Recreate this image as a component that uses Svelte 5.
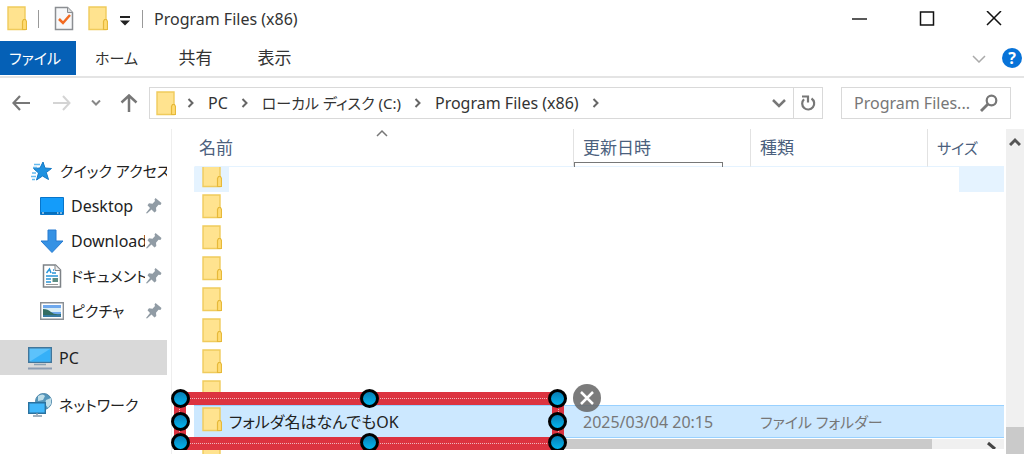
<script lang="ts">
	const tabs = ['ホーム', '共有', '表示'];
	const crumbs = [
		{ name: 'PC' },
		{ name: 'ローカル ディスク (C:)', kana: true },
		{ name: 'Program Files (x86)' }
	];

	const quickLinks = [
		{ name: 'Desktop', icon: 'desktop' },
		{ name: 'Downloads', icon: 'download' },
		{ name: 'ドキュメント', icon: 'document', kana: true },
		{ name: 'ピクチャ', icon: 'picture', kana: true }
	];

	const rows = ['hover', '', '', '', '', '', '', 'partial'];

	const handles = ['top start', 'top middle', 'top end', 'center start', 'center end', 'bottom start', 'bottom middle', 'bottom end'];

	let query = $state('');
</script>

{#snippet folder()}
	<svg class="folder" width="20" height="25" viewBox="0 0 20 25">
		<path d="M1 1h17v22.500H1z" fill="#ffe38f" stroke="#f0cb5c" stroke-width="1.400" />
		<path d="M15.500 23.500v-8l1-2h2l1 2v8z" fill="#ffdc74" stroke="#e6b93a" stroke-width="1.200" />
	</svg>
{/snippet}

{#snippet chevron()}
	<svg class="chevron" width="8" height="10" viewBox="0 0 8 10">
		<path d="M1.500 1l4 4-4 4" fill="none" stroke="#666" stroke-width="2" />
	</svg>
{/snippet}

{#snippet pin()}
	<svg class="pin" width="16" height="16" viewBox="0 0 16 16">
		<path d="M9.500 0l6 5-1 2-2-.3-2.500 3 .3 3.300-1.800 1.500-3-3L1 15.500l-1-.5 4-5L1.500 7.200 3 5.300l3.500.4L9 3 8.500 1.500z" fill="#919ca5" />
	</svg>
{/snippet}

<div class="window">
	<header class="titlebar">
		{@render folder()}
		<span class="divider"></span>
		<button class="tool doc" aria-label="プロパティ">
			<svg width="20" height="25" viewBox="0 0 20 25">
				<path d="M1.500 1.500h12l5 5v17h-17z" fill="#f7f8fa" stroke="#8b8e92" stroke-width="1.500" />
				<path d="M13.500 1.500v5h5" fill="#ddd" stroke="#8b8e92" />
				<path d="M5 13l4 4 7-8" fill="none" stroke="#f26a21" stroke-width="2.500" />
			</svg>
		</button>
		<button class="tool" aria-label="新しいフォルダー">{@render folder()}</button>
		<button class="tool more" aria-label="カスタマイズ">
			<svg width="12" height="10" viewBox="0 0 12 10">
				<path d="M1 0h10v2H1zM1 4.500h10L6 9.500z" fill="#222" />
			</svg>
		</button>
		<span class="divider"></span>
		<h1 class="title">Program Files (x86)</h1>
		<div class="controls">
			<button aria-label="最小化">
				<svg width="16" height="16" viewBox="0 0 16 16"><path d="M0 8h15" stroke="#222" stroke-width="1.500" /></svg>
			</button>
			<button aria-label="最大化">
				<svg width="16" height="16" viewBox="0 0 16 16"><path d="M1.500 1h13v13h-13z" fill="none" stroke="#111" stroke-width="1.500" /></svg>
			</button>
			<button aria-label="閉じる">
				<svg width="16" height="16" viewBox="0 0 16 16"><path d="M1 0l14 14M15 0L1 14" stroke="#111" stroke-width="1.500" /></svg>
			</button>
		</div>
	</header>

	<nav class="ribbon">
		<button class="tab file">ファイル</button>
		{#each tabs as tab}
			<button class="tab">{tab}</button>
		{/each}
		<button class="expand" aria-label="リボンの展開">
			<svg width="14" height="8" viewBox="0 0 14 8"><path d="M1 1l6 6 6-6" fill="none" stroke="#aaa" stroke-width="1.500" /></svg>
		</button>
		<button class="help" aria-label="ヘルプ">?</button>
	</nav>

	<div class="address-row">
		<div class="history">
			<button aria-label="戻る">
				<svg width="18" height="16" viewBox="0 0 18 16"><path d="M8 1L1.500 8 8 15M1.500 8H18" fill="none" stroke="#777" stroke-width="2.200" /></svg>
			</button>
			<button aria-label="進む">
				<svg width="18" height="16" viewBox="0 0 18 16"><path d="M10 1l6.500 7L10 15M16.500 8H0" fill="none" stroke="#d4d4d4" stroke-width="2" /></svg>
			</button>
			<button class="recent" aria-label="最近表示した場所">
				<svg width="10" height="6" viewBox="0 0 10 6"><path d="M1 0.500l4 4 4-4" fill="none" stroke="#888" stroke-width="2" /></svg>
			</button>
			<button aria-label="上へ">
				<svg width="18" height="18" viewBox="0 0 18 18"><path d="M1.500 8.500L9 1.500l7.500 7M9 2v16" fill="none" stroke="#777" stroke-width="2.500" /></svg>
			</button>
		</div>
		<div class="address">
			{@render folder()}
			{@render chevron()}
			{#each crumbs as crumb}
				<a href="#top" class:kana={crumb.kana}>{crumb.name}</a>
				{@render chevron()}
			{/each}
			<button class="drop" aria-label="以前の場所">
				<svg width="14" height="9" viewBox="0 0 14 9"><path d="M1 1l6 6 6-6" fill="none" stroke="#777" stroke-width="2.500" /></svg>
			</button>
			<button class="reload" aria-label="更新">
				<svg width="16" height="16" viewBox="0 0 16 16">
					<path d="M11.500 3.500A6 6 0 1 1 4 4.200" fill="none" stroke="#777" stroke-width="2.200" />
					<path d="M2 1.500h6v6" fill="none" stroke="#777" stroke-width="2.200" />
				</svg>
			</button>
		</div>
		<label class="search">
			<input type="text" aria-label="検索" placeholder="Program Files..." bind:value={query} />
			<svg width="18" height="18" viewBox="0 0 18 18">
				<circle cx="11.500" cy="6.500" r="4.800" fill="none" stroke="#777" stroke-width="2.200" />
				<path d="M8 10l-7 7" stroke="#777" stroke-width="2.800" />
			</svg>
		</label>
	</div>

	<div class="content">
		<aside class="sidebar">
			<a class="place" href="#quick">
				<svg width="24" height="20" viewBox="0 0 24 20">
					<path d="M14 1l2 6 6.500.5-5.200 4 2.200 7L13.500 15 7.500 19l2-7-5-4.500 6.500-.5z" fill="#1e91e0" stroke="#1478c4" />
					<path d="M5 3.500h6M4 6.500h4M3 12h4M2 15.500h5M3 18.500h3" stroke="#64baf0" stroke-width="1.500" />
				</svg>
				<span class="name kana">クイック アクセス</span>
			</a>
			{#each quickLinks as link}
				<a class="place sub" href="#{link.icon}">
					<svg width="24" height="24" viewBox="0 0 24 24">
						{#if link.icon === 'desktop'}
							<path d="M.5 3.500h23v17H.5z" fill="#149cfa" stroke="#0875ca" />
							<path d="M1 18h22v2H1z" fill="#0670bd" />
							<path d="M2 19h2M17 19h1.500M20 19h2" stroke="#fff" />
						{:else if link.icon === 'download'}
							<path d="M8 1h8v11h7L12 23.500 1 12h7z" fill="#3692e4" stroke="#277bd0" />
						{:else if link.icon === 'document'}
							<path d="M3.500 1h12l5 5v17h-17z" fill="#fff" stroke="#7d8287" stroke-width="1.500" />
							<path d="M15 1v5.500h5.500" fill="#eee" stroke="#7d8287" />
							<path d="M6.500 9l3-4 1.500 4M13 6h1M12 9h4M6 12h12M6 15h5M6 18h5" fill="none" stroke="#2995d8" stroke-width="1.500" />
							<path d="M6 20.500h12" stroke="#999" />
							<path d="M12.500 14h5.500v4h-5.500z" fill="#5d8e84" />
						{:else}
							<path d="M.7 3.700h22.600v16.600H.7z" fill="#fff" stroke="#8b9095" stroke-width="1.400" />
							<path d="M3 6h18v12H3z" fill="#6fa9ee" />
							<path d="M3 9h18v4H3z" fill="#d9edf5" />
							<path d="M3 10q5 0 8 3t10 2v3H3z" fill="#356d62" />
							<path d="M3 16h18v2H3z" fill="#387aa2" />
						{/if}
					</svg>
					<span class="name" class:kana={link.kana}>{link.name}</span>
					{@render pin()}
				</a>
			{/each}
			<a class="place root current" href="#pc">
				<svg width="24" height="24" viewBox="0 0 24 24">
					<path d="M.7 1.700h22.600v14.600H.7z" fill="#5cc2fb" stroke="#41769b" stroke-width="1.400" />
					<path d="M2 15.500L22 3v12.500z" fill="#35b0f8" />
					<path d="M6 18.500h12" stroke="#8ba0b2" stroke-width="1.500" />
					<path d="M0 22.500h24" stroke="#8c9db2" stroke-width="2" />
				</svg>
				<span class="name">PC</span>
			</a>
			<a class="place root" href="#network">
				<svg width="24" height="24" viewBox="0 0 24 24">
					<circle cx="15.500" cy="8.500" r="8" fill="#5496bb" stroke="#4c86a9" />
					<path d="M10 3q5-3 7 0l-2 4-5 1zM18 7l5-2v6l-3 4-3-4z" fill="#bfdee9" />
					<path d="M.7 9.700h16.600v10.600H.7z" fill="#41b7fa" stroke="#2b729f" stroke-width="1.400" />
					<path d="M9 20v2M5 23h9" stroke="#8297a8" stroke-width="1.500" />
				</svg>
				<span class="name kana">ネットワーク</span>
			</a>
		</aside>

		<main class="files">
			<div class="list">
				<table>
					<colgroup>
						<col />
						<col class="col-wide" />
						<col class="col-wide" />
						<col class="col-size" />
					</colgroup>
					<thead>
						<tr>
							<th>
								名前
								<svg class="sort" width="12" height="8" viewBox="0 0 12 8"><path d="M1 7l5-5 5 5" fill="none" stroke="#777" stroke-width="1.500" /></svg>
							</th>
							<th class="date">更新日時</th>
							<th>種類</th>
							<th>サイズ</th>
						</tr>
					</thead>
					<tbody>
						{#each rows as row}
							<tr class={row}>
								<td><div class="cell"><span class="mark">{@render folder()}</span></div></td>
								<td></td>
								<td></td>
								<td><div class="cell tail"></div></td>
							</tr>
						{/each}
						<tr class="selected">
							<td>
								<div class="cell"><span class="mark">{@render folder()}</span>フォルダ名はなんでもOK</div>
								<div class="annotation">
									<div class="frame"></div>
									{#each handles as handle}
										<span class="handle {handle}"></span>
									{/each}
								</div>
								<button class="remove" aria-label="削除">
									<svg width="28" height="28" viewBox="0 0 28 28"><path d="M8 8l12 12M20 8L8 20" stroke="#fff" stroke-width="2.500" /></svg>
								</button>
							</td>
							<td>2025/03/04 20:15</td>
							<td class="kana">ファイル フォルダー</td>
							<td></td>
						</tr>
					</tbody>
				</table>
			</div>
			<div class="hscroll">
				<div class="thumb"></div>
				<svg width="12" height="10" viewBox="0 0 12 10"><path d="M2 4l7 6" stroke="#444" stroke-width="3" /></svg>
			</div>
			<div class="next">{@render folder()}</div>
		</main>

		<div class="vscroll">
			<svg width="12" height="9" viewBox="0 0 12 9"><path d="M1 8l5-5 5 5" fill="none" stroke="#555" stroke-width="3" /></svg>
			<div class="thumb"></div>
		</div>
	</div>
</div>

<style>
	:global(body) {
		overflow: hidden;
		background: #fff;
	}

	.window {
		display: flex;
		flex-direction: column;
		min-height: 100vh;
		font-family: 'Noto Sans', 'Noto Sans CJK JP', sans-serif;
		font-size: 16px;
		font-feature-settings: 'palt';
		line-height: 24px;
		color: #333;
	}

	svg {
		display: block;
		flex: none;
	}

	button {
		display: flex;
		align-items: center;
		justify-content: center;
		padding: 0;
		border: none;
		background: none;
		font: inherit;
		font-feature-settings: inherit;
		color: inherit;
		cursor: pointer;
	}

	a {
		color: inherit;
		text-decoration: none;
		white-space: nowrap;
	}

	.kana {
		font-size: 15px;
	}

	.titlebar {
		display: flex;
		align-items: center;
		height: 37px;
		padding: 0 22px 4px 7px;
	}

	.divider {
		width: 1px;
		height: 18px;
		margin: 0 11px;
		background: #999;
	}

	.tool {
		margin-right: 14px;
	}

	.doc {
		margin-left: 4px;
	}

	.more {
		margin: 4px 0 0 -3px;
	}

	.title {
		margin: 0;
		font-size: 16px;
		font-weight: 400;
	}

	.controls {
		display: flex;
		gap: 51px;
		margin-left: auto;
	}

	.ribbon {
		display: flex;
		height: 35px;
		border-bottom: 2px solid #e4e4e4;
	}

	.tab {
		width: 79px;
		height: 34px;
		font-size: 17px;
	}

	.tab:nth-child(2) {
		font-size: 15px;
	}

	.tab.file {
		width: 76px;
		margin-right: 1px;
		padding-right: 6px;
		background: #0560b6;
		color: #fff;
		font-size: 15px;
	}

	.expand {
		margin-left: auto;
	}

	.help {
		width: 20px;
		height: 20px;
		margin: 7px 2px 0 16px;
		border-radius: 50%;
		background: #0873d8;
		color: #fff;
		font-weight: 700;
		line-height: 20px;
	}

	.address-row {
		display: flex;
		padding: 9px 13px 10px 0;
	}

	.history {
		display: flex;
		align-items: center;
		justify-content: space-between;
		width: 126px;
		margin: 0 11px 0 12px;
	}

	.recent {
		margin: 0 -4px;
	}

	.address {
		display: flex;
		flex: 1;
		align-items: center;
		gap: 13px;
		height: 30px;
		padding-left: 6px;
		border: 1px solid #d9d9d9;
	}

	.address .folder {
		margin-right: -2px;
	}

	.drop {
		margin-left: auto;
	}

	.reload {
		width: 29px;
		height: 30px;
		margin-left: -6px;
		border-left: 1px solid #d9d9d9;
	}

	.search {
		display: flex;
		align-items: center;
		width: 144px;
		margin-left: 18px;
		padding: 0 12px;
		border: 1px solid #d9d9d9;
	}

	.search input {
		flex: 1;
		min-width: 0;
		padding: 0;
		border: none;
		outline: none;
		font: inherit;
	}

	.search input::placeholder {
		color: #777;
		opacity: 1;
	}

	.content {
		display: flex;
		flex: 1;
	}

	.sidebar {
		width: 167px;
		padding-top: 24px;
	}

	.place {
		display: flex;
		align-items: center;
		gap: 7px;
		height: 35px;
		padding-left: 29px;
		color: #222;
	}

	.place .name {
		flex: 1;
		overflow: hidden;
	}

	.place.sub {
		padding-left: 40px;
	}

	.sub .name {
		margin-right: -6px;
	}

	.pin {
		margin-right: 5px;
	}

	.place.root {
		margin-top: 12px;
		padding-left: 28px;
	}

	.place.current {
		background: #d9d9d9;
	}

	.files {
		flex: 1;
		min-width: 0;
		margin-left: 4px;
		border-left: 1px solid #eee;
	}

	.list {
		padding-left: 22px;
	}

	table {
		width: 100%;
		table-layout: fixed;
		border-collapse: separate;
		border-spacing: 0;
	}

	.col-wide {
		width: 177px;
	}

	.col-size {
		width: 77px;
	}

	th {
		position: relative;
		box-sizing: border-box;
		height: 38px;
		padding: 0 0 0 9px;
		border-left: 1px solid #e2e2e2;
		border-bottom: 1px solid #e5f3ff;
		font-size: 17px;
		font-weight: 400;
		text-align: left;
		color: #4b607d;
	}

	th:first-child {
		padding-left: 4px;
		border-left-color: transparent;
	}

	th:last-child {
		font-size: 15px;
	}

	.sort {
		position: absolute;
		top: 0;
		left: calc(50% - 8px);
	}

	/* edge of the tooltip left under the date header */
	.date::after {
		content: '';
		position: absolute;
		bottom: -1px;
		left: 0;
		width: 147px;
		height: 4px;
		border: 1px solid #777;
		border-bottom: none;
	}

	td {
		position: relative;
		padding: 0;
		white-space: nowrap;
	}

	.cell {
		display: flex;
		height: 31px;
		overflow: hidden;
	}

	.mark {
		display: flex;
		flex: none;
		align-items: flex-end;
		box-sizing: border-box;
		width: 35px;
		padding: 0 0 4px 8px;
	}

	.hover .cell {
		height: 25px;
	}

	.hover .mark {
		background: #e5f3ff;
	}

	.hover .tail {
		margin-left: 32px;
		background: #e5f3ff;
	}

	.partial .cell {
		height: 27px;
	}

	.partial .mark {
		align-items: flex-start;
		padding-top: 2px;
	}

	.selected .cell {
		align-items: center;
		height: 31px;
		color: #222;
	}

	.selected td {
		padding-left: 10px;
		border: solid #99d1ff;
		border-width: 1px 0;
		background: #cce8ff;
		color: #777;
	}

	.selected td:first-child {
		padding-left: 0;
	}

	.annotation {
		position: absolute;
		z-index: 1;
		top: -17px;
		right: 6px;
		left: -23px;
		height: 61px;
		overflow: hidden;
	}

	.frame {
		position: absolute;
		inset: 3px 3px 0;
		border: 13px solid #dc3340;
		border-width: 13px 12px;
	}

	.frame::after {
		content: '';
		position: absolute;
		inset: -7px;
		border: 1px dotted #eeb8bd;
	}

	.handle {
		position: absolute;
		box-sizing: border-box;
		width: 19px;
		height: 19px;
		border: 3px solid #000;
		border-radius: 50%;
		background: linear-gradient(#087db4, #04b5ee);
	}

	.top {
		top: 0;
	}

	.center {
		top: 23px;
	}

	.bottom {
		top: 44px;
	}

	.start {
		left: 0;
	}

	.middle {
		left: calc(50% - 9px);
	}

	.end {
		right: 0;
	}

	.remove {
		position: absolute;
		z-index: 1;
		top: -22px;
		right: -28px;
		border-radius: 50%;
		background: rgba(100, 100, 100, 0.85);
	}

	.hscroll {
		display: flex;
		justify-content: space-between;
		height: 10px;
		margin-top: 1px;
		padding-right: 6px;
		background: #f0f0f0;
	}

	.hscroll .thumb {
		width: 92%;
		background: #cacaca;
	}

	.next {
		height: 5px;
		padding-left: 30px;
		overflow: hidden;
	}

	.next .folder {
		margin-top: -1px;
	}

	.vscroll {
		display: flex;
		flex-direction: column;
		align-items: center;
		justify-content: space-between;
		width: 18px;
		margin-left: 2px;
		padding-top: 8px;
		background: #f0f0f0;
	}

	.vscroll .thumb {
		width: 100%;
		height: 27px;
		background: #cacaca;
	}
</style>
